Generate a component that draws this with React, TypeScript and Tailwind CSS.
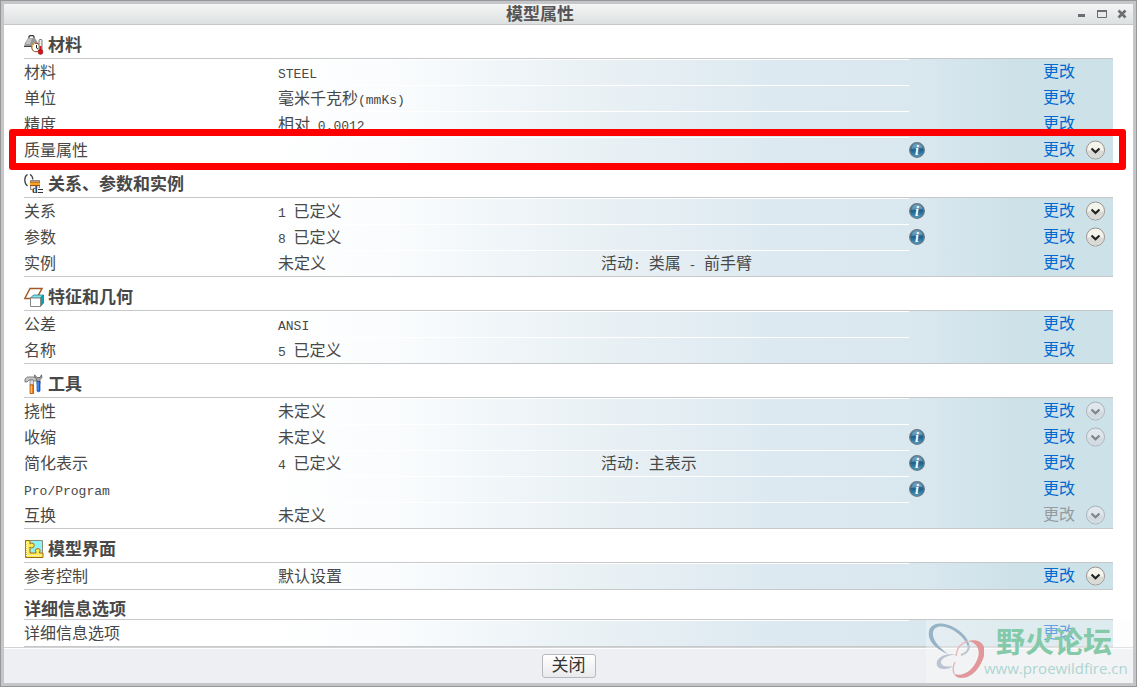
import React from "react";

type Expand = "active" | "muted";

interface Item {
  label: string;
  value?: string;
  status?: string;
  info?: boolean;
  expand?: Expand;
  disabled?: boolean;
  highlighted?: boolean;
}

interface Group {
  title: string;
  icon?: React.ReactNode;
  items: Item[];
}

function MaterialIcon() {
  return (
    <svg className="h-5 w-5 shrink-0" viewBox="0 0 20 20" aria-hidden="true">
      <path d="M5 3V1.5L6 .7h3l1 .8V3" fill="none" stroke="#333" strokeWidth="1.2" />
      <path d="M4 3h7l2.500 4 .5 4.500H0L1 8z" fill="#999" />
      <path d="M4 3.500h4L6 9H1.500z" fill="#c4c4c4" />
      <path d="M0 11.500h8" stroke="#444" />
      <circle cx="12" cy="12.500" r="4.200" fill="#fff" stroke="#8a4b14" strokeWidth="1.1" />
      <path d="M8 12a4.500 4.500 0 0 1 3-4" fill="none" stroke="#f5b35a" />
      <path d="M12.500 10v3l1.500 1" fill="none" stroke="#222" />
      <rect x="15" y="4.500" width="3" height="12" rx="1" fill="#f2efe6" stroke="#555" strokeWidth=".8" />
      <path d="M16.500 11v6" stroke="#e01010" strokeWidth="2" />
      <circle cx="16.500" cy="17" r="2.400" fill="#e31212" stroke="#7b0f0f" strokeWidth=".6" />
    </svg>
  );
}

function RelationIcon() {
  return (
    <svg className="h-5 w-5 shrink-0" viewBox="0 0 20 20" aria-hidden="true">
      <path d="M3.500.5Q.8 2 .8 6t2.700 6M6 .5q2.800 1.500 2.800 5" fill="none" stroke="#444" strokeWidth="1.3" />
      <path d="M6.500 6.500h9v9h-9z" fill="#e6e6e6" stroke="#888" />
      <path d="M6 8h10v3H6z" fill="#f7a51c" />
      <path d="M6 8h10M6 11.500h10" stroke="#a14b16" />
      <path d="M8.500 14H19v6H8.500z" fill="#fff" />
      <text x="8" y="19" fontSize="10" fontWeight="bold" fontFamily="Liberation Serif, serif" fill="#333">d</text>
      <path d="M14 15.500h5M14 18.500h5" stroke="#333" />
    </svg>
  );
}

function GeometryIcon() {
  return (
    <svg className="h-5 w-5 shrink-0" viewBox="0 0 20 20" aria-hidden="true">
      <path d="M6 1.500h12L12.500 11.500H.8z" fill="#fff" stroke="#a35a26" strokeWidth="1.500" />
      <path d="M6.500 11l3-3h10l-3 3z" fill="#7fe5ea" stroke="#257e86" strokeWidth=".8" />
      <path d="M16.500 11l3-3v8l-3 3.500z" fill="#06a6b0" stroke="#06777e" strokeWidth=".7" />
      <path d="M6.500 11h10v8.500h-10z" fill="#fff" stroke="#888" />
    </svg>
  );
}

function ToolsIcon() {
  return (
    <svg className="h-5 w-5 shrink-0" viewBox="0 0 20 20" aria-hidden="true">
      <path d="M10.500.8q-.5 3.200 2.500 4.700v4h3v-4q3-1.500 1.500-4.700l-1.500 2.700h-3z" fill="#aaa" stroke="#555" strokeWidth=".8" />
      <path d="M13 7.500h3V17q-1.500 1.500-3 0z" fill="#1769e8" stroke="#0b3d96" strokeWidth=".7" />
      <path d="M14 8v8.500" stroke="#6fb0ff" strokeWidth=".8" />
      <path d="M1 8V5l2.500-2H10l2.500 2v2H9.500L9 6H5L3 8z" fill="#c3c9cc" stroke="#666" strokeWidth=".8" />
      <path d="M6 6h3.500v5H6z" fill="#ddd" stroke="#777" strokeWidth=".7" />
      <path d="M6 11h3.500v8.500H6z" fill="#ef7d16" stroke="#9b3c08" strokeWidth=".7" />
      <path d="M7.200 11.500v7.500" stroke="#ffe07a" />
    </svg>
  );
}

function PuzzleIcon() {
  return (
    <svg className="h-5 w-5 shrink-0" viewBox="0 0 20 20" aria-hidden="true">
      <path d="M1.500 1.500h17v17h-17z" fill="#8ff4f8" stroke="#8a8a7a" />
      <path
        d="M1.500 1.500H6V5q1.500-1.500 3.500-.5 1.500 1.500 0 4-2 1-3.500-.5v6h6v-1q-1.500-2 0-3 2.500-1 4 .500.5 1.500-.5 2.500v1h3.500v4.500h-17z"
        fill="#ffec55"
        stroke="#a46a10"
      />
      <path d="M3.500 3v13.500H18M2.500 4v14" fill="none" stroke="#fffbc0" strokeDasharray="1 1" />
    </svg>
  );
}

function InfoIcon() {
  return (
    <svg className="h-4 w-4" viewBox="0 0 16 16" role="img" aria-label="i">
      <defs>
        <linearGradient id="infoFill" x1="0" y1="0" x2="0" y2="1">
          <stop offset="0" stopColor="#5f9cc0" />
          <stop offset=".5" stopColor="#1c628d" />
          <stop offset="1" stopColor="#4aa0c8" />
        </linearGradient>
      </defs>
      <circle cx="8" cy="8" r="7.300" fill="url(#infoFill)" stroke="#667783" strokeWidth="1.300" />
      <path d="M2.500 7Q3 2.500 8 2.300T13.500 6Q8 5.500 2.500 7z" fill="#fff" opacity=".22" />
      <text x="8" y="12.500" textAnchor="middle" fontSize="14" fontWeight="bold" fontStyle="italic" fontFamily="Liberation Serif, serif" fill="#fff">
        i
      </text>
    </svg>
  );
}

function ExpandButton({ kind, label }: { kind: Expand; label: string }) {
  const active = kind === "active";
  return (
    <button type="button" aria-label={label} disabled={!active} className="block h-5 w-5">
      <svg className="h-5 w-5" viewBox="0 0 20 20" aria-hidden="true">
        <circle cx="10.500" cy="10" r="9" fill={active ? "#f5f4ec" : "#dfe7ec"} stroke={active ? "#98928d" : "#a9b2b8"} />
        <path d="M2.500 10.500h16a8 8 0 0 1-16 0z" fill={active ? "#d9d9d6" : "#d2dbe1"} />
        <path d="M6.500 8.500l4 3.800 4-3.800" fill="none" stroke={active ? "#222" : "#7c858c"} strokeWidth="2.200" />
      </svg>
    </button>
  );
}

/* Latin runs use the half-width monospace face, so they need their own size. */
function MixedText({ text }: { text: string }) {
  const runs = text.split(/([\x20-\x7e]+)/).filter(Boolean);
  return (
    <>
      {runs.map((run, i) =>
        /^[\x20-\x7e]+$/.test(run) ? (
          <span key={i} className="whitespace-pre font-['Liberation_Mono',monospace] text-[13px] leading-4">
            {run}
          </span>
        ) : (
          <span key={i}>{run}</span>
        ),
      )}
    </>
  );
}

const groups: Group[] = [
  {
    title: "材料",
    icon: <MaterialIcon />,
    items: [
      { label: "材料", value: "STEEL" },
      { label: "单位", value: "毫米千克秒(mmKs)" },
      { label: "精度", value: "相对 0.0012" },
      { label: "质量属性", info: true, expand: "active", highlighted: true },
    ],
  },
  {
    title: "关系、参数和实例",
    icon: <RelationIcon />,
    items: [
      { label: "关系", value: "1 已定义", info: true, expand: "active" },
      { label: "参数", value: "8 已定义", info: true, expand: "active" },
      { label: "实例", value: "未定义", status: "活动: 类属 - 前手臂" },
    ],
  },
  {
    title: "特征和几何",
    icon: <GeometryIcon />,
    items: [
      { label: "公差", value: "ANSI" },
      { label: "名称", value: "5 已定义" },
    ],
  },
  {
    title: "工具",
    icon: <ToolsIcon />,
    items: [
      { label: "挠性", value: "未定义", expand: "muted" },
      { label: "收缩", value: "未定义", info: true, expand: "muted" },
      { label: "简化表示", value: "4 已定义", status: "活动: 主表示", info: true },
      { label: "Pro/Program", info: true },
      { label: "互换", value: "未定义", expand: "muted", disabled: true },
    ],
  },
  {
    title: "模型界面",
    icon: <PuzzleIcon />,
    items: [{ label: "参考控制", value: "默认设置", expand: "active" }],
  },
  {
    title: "详细信息选项",
    items: [{ label: "详细信息选项" }],
  },
];

function Row({ item }: { item: Item }) {
  return (
    <tr className="relative h-[26px]">
      <th scope="row" className="border-t border-white p-0 text-left font-normal">
        <MixedText text={item.label} />
        {item.highlighted && (
          <span className="pointer-events-none absolute -bottom-[7px] -left-[15px] -right-[13px] -top-2 z-10 rounded-[3px] border-[7px] border-[#ff0000]" />
        )}
      </th>
      <td className="border-t border-white p-0">{item.value && <MixedText text={item.value} />}</td>
      <td className="border-t border-white p-0">{item.status && <MixedText text={item.status} />}</td>
      <td className="p-0">{item.info && <InfoIcon />}</td>
      <td className="p-0">
        <div className="flex items-center gap-2.5">
          <button
            type="button"
            disabled={item.disabled}
            aria-label={`更改 ${item.label}`}
            className="text-[#0068cf] disabled:text-[#949b9f]"
          >
            更改
          </button>
          {item.expand && <ExpandButton kind={item.expand} label={item.label} />}
        </div>
      </td>
    </tr>
  );
}

function Section({ group }: { group: Group }) {
  return (
    <section>
      <div
        className={
          group.icon
            ? "flex h-[34px] items-end gap-1 border-b border-[#c6c8ca] pb-[3px]"
            : "flex h-[30px] items-end border-b border-[#c6c8ca]"
        }
      >
        {group.icon}
        <h2 className="text-[17px] font-bold leading-[18px]">{group.title}</h2>
      </div>
      <div className="border-b border-[#c6c8ca]">
        <table
          aria-label={group.title}
          className="w-full table-fixed border-separate border-spacing-0 bg-[linear-gradient(90deg,#fff_22%,#fafcfd_34%,#eff5f8_45%,#e8f0f4_54%,#dde9f1_69%,#d9e7ef_83%,#cde1e9_91%)] text-base leading-5"
        >
          <colgroup>
            <col className="w-[254px]" />
            <col className="w-[323px]" />
            <col />
            <col className="w-[134px]" />
            <col className="w-[70px]" />
          </colgroup>
          <tbody>
            {group.items.map((item) => (
              <Row key={item.label} item={item} />
            ))}
          </tbody>
        </table>
      </div>
    </section>
  );
}

function TitleBar() {
  return (
    <header className="flex h-[21px] items-center border-b border-[#c4c6c8] bg-linear-to-b from-[#f5f5f5] to-[#dde0e1] pr-[5px]">
      <h1 className="flex-1 pt-0.5 text-center text-[17px] font-bold leading-5 text-[#555]">模型属性</h1>
      <div className="flex gap-2 text-[#6b6e72]">
        <button type="button" aria-label="最小化" className="h-3 w-3">
          <svg className="h-3 w-3" viewBox="0 0 12 12" aria-hidden="true">
            <path d="M2 7.500h7" stroke="currentColor" strokeWidth="3" />
          </svg>
        </button>
        <button type="button" aria-label="最大化" className="h-3 w-3">
          <svg className="h-3 w-3" viewBox="0 0 12 12" aria-hidden="true">
            <path d="M1.500 2.500h9v7h-9z" fill="none" stroke="currentColor" />
            <path d="M1 3h10" stroke="currentColor" strokeWidth="2" />
          </svg>
        </button>
        <button type="button" aria-label="关闭窗口" className="h-3 w-3">
          <svg className="h-3 w-3" viewBox="0 0 12 12" aria-hidden="true">
            <path d="M2.500 2.500l7 7M9.500 2.500l-7 7" stroke="currentColor" strokeWidth="2.600" />
          </svg>
        </button>
      </div>
    </header>
  );
}

function Watermark() {
  return (
    <div className="pointer-events-none absolute bottom-0 right-0 z-20 flex h-[63px] w-[207px] bg-[#f8fbf8]/40">
      <svg className="h-[63px] w-[58px] shrink-0" viewBox="0 0 58 63" aria-hidden="true">
        <path
          fillRule="evenodd"
          fill="#97b3c6"
          d="M3 11C5 2 18 1 29 8c10 6 16 14 14 22-2-9-8-15-16-20C18 5 9 5 7 12c-1 7 5 15 15 22C9 29 1 20 3 11z"
        />
        <path d="M43 25q0 8-8 10" fill="none" stroke="#b9c6d1" strokeWidth="2" />
        <path
          fill="#e2979a"
          d="M42 21c11-3 19 3 16 15-3 11-12 22-22 22-4 0-6-1-8-4 10 3 19-4 23-14 4-9 1-17-9-19z"
        />
        <path d="M42 21q-11 3-12 15M28 54q-2-6 1-12" fill="none" stroke="#e7b9bf" strokeWidth="1.500" />
        <path d="M30 34q-15-1-19 7-2 8 8 8 5 0 8-3-10 2-12-3-1-6 15-9z" fill="#bcc4d2" />
      </svg>
      <div className="flex flex-col whitespace-nowrap">
        <span className="pl-3 font-['Noto_Sans_CJK_SC',sans-serif] text-[29px] font-bold leading-10 text-[#84c9a8]">
          野火论坛
        </span>
        <span className="font-['Open_Sans','Noto_Sans',sans-serif] text-[15px] leading-4 text-[#add6d2]">
          www.proewildfire.cn
        </span>
      </div>
    </div>
  );
}

export default function App() {
  return (
    <div className="flex min-h-screen flex-col border border-[#979797] bg-[#c4c6ca] p-[3px] font-['Liberation_Sans','Noto_Sans_CJK_SC',sans-serif] text-[#484848]">
      <div className="relative flex flex-1 flex-col bg-white">
        <TitleBar />
        <main className="flex-1 px-5">
          {groups.map((group) => (
            <Section key={group.title} group={group} />
          ))}
        </main>
        <footer className="flex h-9 items-center justify-center border-t border-[#d0d2d4] bg-[#eeeff2] shadow-[inset_0_1px_0_#fff]">
          <button
            type="button"
            className="h-6 w-[54px] rounded-[3px] border border-[#b5b8bc] bg-linear-to-b from-white to-[#e9eaec] text-[17px] leading-5 text-[#333]"
          >
            关闭
          </button>
        </footer>
        <Watermark />
      </div>
    </div>
  );
}
